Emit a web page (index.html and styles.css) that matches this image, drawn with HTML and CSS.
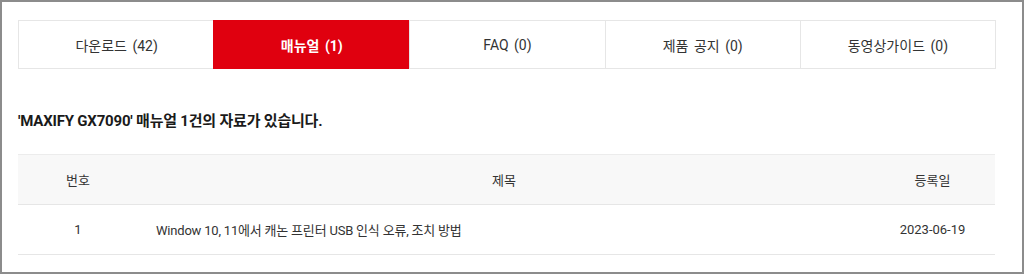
FILE: index.html
```html
<!DOCTYPE html>
<html lang="ko">
<head>
<meta charset="utf-8">
<link rel="stylesheet" href="styles.css">
</head>
<body>
<div class="frame">
  <ul class="tabs">
    <li class="tab">다운로드 (42)</li>
    <li class="tab active">매뉴얼 (1)</li>
    <li class="tab">FAQ (0)</li>
    <li class="tab">제품 공지 (0)</li>
    <li class="tab">동영상가이드 (0)</li>
  </ul>
  <h2 class="result">'MAXIFY GX7090' 매뉴얼 1건의 자료가 있습니다.</h2>
  <table class="list">
    <thead>
      <tr><th class="c-no">번호</th><th class="c-title">제목</th><th class="c-date">등록일</th></tr>
    </thead>
    <tbody>
      <tr><td class="c-no">1</td><td class="c-title left">Window 10, 11에서 캐논 프린터 USB 인식 오류, 조치 방법</td><td class="c-date">2023-06-19</td></tr>
    </tbody>
  </table>
</div>
</body>
</html>
```
FILE: styles.css
```css
html, body { margin: 0; padding: 0; background: #fff; }
body { font-family: Roboto, "Noto Sans CJK KR", sans-serif; color: #222; }
.frame {
  width: 1024px; height: 274px; box-sizing: border-box;
  border: 2px solid #8c8c8c;
  padding: 18px 26px 0 16px;
}
.tabs {
  list-style: none; margin: 0; padding: 0;
  display: grid; grid-template-columns: repeat(5, 1fr);
  border: 1px solid #e6e6e6;
  height: 49px; box-sizing: border-box;
}
.tab {
  display: flex; align-items: center; justify-content: center;
  font-size: 14px; color: #333;
  border-left: 1px solid #e6e6e6;
  word-spacing: 2px;
}
.tab:first-child { border-left: none; }
.tab.active {
  background: #e0000f; color: #fff; font-weight: 700;
  margin: -1px 0 -1px -1px; border-left: 1px solid #e0000f;
}
.result {
  margin: 40px 0 0 0; font-size: 15px; font-weight: 700; color: #1a1a1a;
  line-height: 24px; letter-spacing: -0.2px;
}
.list {
  width: 977px; margin: 21px 0 0 0; border-collapse: collapse;
  font-size: 13px; color: #333;
}
.list thead th {
  background: #f8f8f8; font-weight: 400; height: 49px;
  border-top: 1px solid #ececec; border-bottom: 1px solid #e6e6e6;
  padding: 0;
}
.list td { height: 49px; border-bottom: 1px solid #e6e6e6; padding: 0; text-align: center; }
.c-no { width: 120px; }
.c-date { width: 125px; }
.list td.left { text-align: left; padding-left: 18px; letter-spacing: -0.2px; }
```
